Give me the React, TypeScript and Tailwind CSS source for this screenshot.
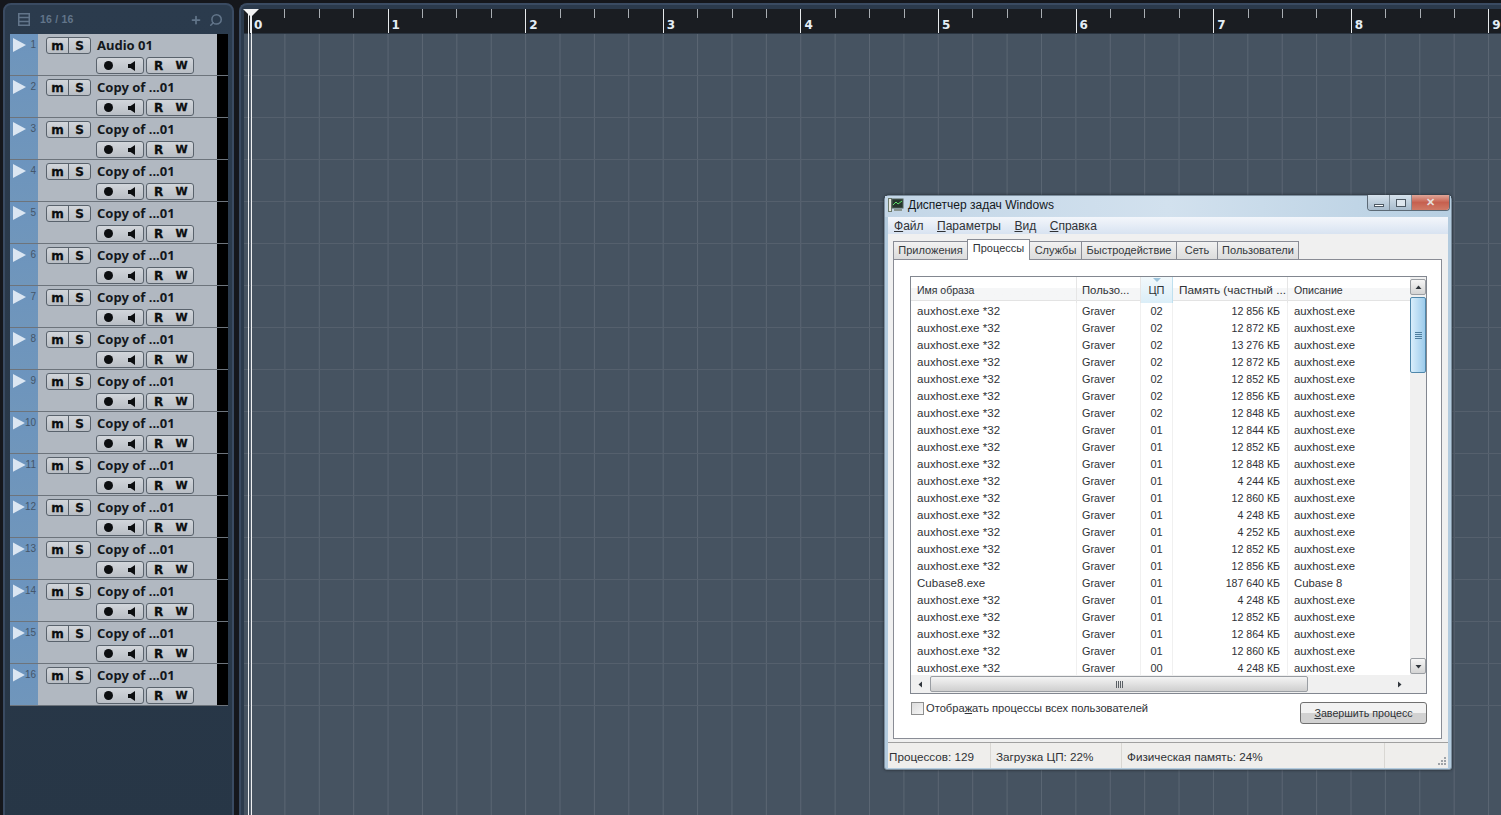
import React from "react";
import { Plus, Search } from "lucide-react";

const tracks = Array.from({ length: 16 }, (_, i) => ({
  n: i + 1,
  name: i === 0 ? "Audio 01" : "Copy of ...01",
}));

const mems = ["12 856","12 872","13 276","12 872","12 852","12 856","12 848","12 844","12 852","12 848","4 244","12 860","4 248","4 252","12 852","12 856","187 640","4 248","12 852","12 864","12 860","4 248"];

const rows = mems.map((m, i) => ({
  name: i === 16 ? "Cubase8.exe" : "auxhost.exe *32",
  cpu: i < 7 ? "02" : i < 21 ? "01" : "00",
  mem: m + " КБ",
  desc: i === 16 ? "Cubase 8" : "auxhost.exe",
}));

const glyph = "font-['DejaVu_Sans'] font-bold text-[12px] leading-none text-[#0c0e10] [-webkit-text-stroke:0.3px_#0c0e10] flex items-center justify-center";
const btn = "h-[17px] rounded-[3px] border border-[#59626c] bg-gradient-to-b from-[#d2d6db] to-[#b9bec5] flex";

function Track({ n, name }: { n: number; name: string }) {
  return (
    <div className="flex h-[42px] w-[218px] border-b border-[#6d747c]">
      <div className="flex w-[28px] justify-between bg-gradient-to-b from-[#6c94be] to-[#7096bb] pl-[3px] pr-[2px] pt-[4px]">
        <svg width="13" height="14" viewBox="0 0 13 14"><polygon points="0,0 13,7 0,14" fill="#dbe6f2" /></svg>
        <span className="font-['Liberation_Sans'] text-[10px] leading-[11px] pt-[1px] text-[#44566a]">{n}</span>
      </div>
      <div className="flex-1 bg-[#b1b8c1] pl-[8px] pt-[3px]">
        <div className="flex h-[17px] items-center">
          <div className={btn + " w-[45px]"}>
            <span className={glyph + " w-[22px] border-r border-[#59626c]"}>m</span>
            <span className={glyph + " flex-1"}>S</span>
          </div>
          <span className="ml-[6px] font-['Noto_Sans'] text-[13px] font-bold leading-[17px] text-[#14181d] whitespace-nowrap">{name}</span>
        </div>
        <div className="ml-[50px] mt-[3px] flex gap-[2px]">
          <div className={btn + " w-[48px] items-center justify-between pl-[7px] pr-[8px]"}>
            <span className="h-[9px] w-[9px] rounded-full bg-[#0c0e10]" />
            <svg width="7" height="10" viewBox="0 0 7 10"><polygon points="0,3 2.5,3 7,0 7,10 2.5,7 0,7" fill="#0c0e10" /></svg>
          </div>
          <div className={btn + " w-[48px]"}>
            <span className={glyph + " w-[23px]"}>R</span>
            <span className={glyph + " flex-1 !text-[11px]"}>W</span>
          </div>
        </div>
      </div>
      <div className="w-[11px] bg-black" />
    </div>
  );
}

function Bar({ n }: { n: number }) {
  return (
    <div className="flex w-[137.6px] shrink-0">
      <div className="h-[24px] w-[34.4px] border-l border-[#e6e9ec] pl-[3px] pt-[9px] font-['DejaVu_Sans'] text-[12px] font-bold leading-[15px] text-[#e4eef6]">{n}</div>
      {[0, 1, 2].map((b) => (
        <div key={b} className="w-[34.4px]"><div className="h-[9px] w-px bg-[#a9aeb3]" /></div>
      ))}
    </div>
  );
}

const tabs = [
  { t: "Приложения", w: "w-[75px]" },
  { t: "Процессы", w: "w-[63px]", on: true },
  { t: "Службы", w: "w-[53px]" },
  { t: "Быстродействие", w: "w-[96px]" },
  { t: "Сеть", w: "w-[42px]" },
  { t: "Пользователи", w: "w-[82px]" },
];

const cols = "grid grid-cols-[166px_64px_32px_115px_122px]";

function ScrollBtn({ d, cls }: { d: string; cls: string }) {
  return (
    <div className={"flex items-center justify-center " + cls}>
      <svg width="7" height="7" viewBox="0 0 7 7"><polygon points={d} fill="#30363c" /></svg>
    </div>
  );
}

function TaskManager() {
  return (
    <div className="absolute left-[884px] top-[195px] flex h-[575px] w-[568px] flex-col rounded-t-[5px] rounded-b-[3px] border border-[#7d8f9f] bg-[#b3cbde] font-['Liberation_Sans'] text-[12px] text-[#2f3236] shadow-[0_0_3px_#20262c]">
      <div className="relative flex h-[21px] shrink-0 items-center bg-gradient-to-r from-[#c3d6e7] via-[#d2e1ee] to-[#b7cfe2] pb-[4px] pl-[3px]">
        <svg width="16" height="14" viewBox="0 0 16 14">
          <rect x="0.5" y="0.5" width="3" height="13" fill="#e7e7e0" stroke="#6d7b6c" />
          <rect x="4" y="1" width="11" height="9" fill="#26352d" stroke="#506058" />
          <path d="M5 7 L8 4 L10 6 L14 3" stroke="#5fe06a" fill="none" />
          <rect x="6" y="11" width="8" height="2" fill="#8b9691" />
        </svg>
        <span className="ml-[4px] text-[12px] text-[#14181c]">Диспетчер задач Windows</span>
        <div className="absolute right-[1px] top-[-1px] flex h-[16px] w-[83px] overflow-hidden rounded-b-[4px] border border-t-0 border-[#5c6a76]">
          <div className="flex w-[22px] items-end justify-center border-r border-[#7f8d99] bg-gradient-to-b from-[#d5e1ec] to-[#a8bccd] pb-[3px]"><div className="h-[3px] w-[10px] border border-[#4d5964] bg-white" /></div>
          <div className="flex w-[22px] items-center justify-center border-r border-[#7f8d99] bg-gradient-to-b from-[#d5e1ec] to-[#a8bccd]"><div className="h-[8px] w-[10px] border border-[#4d5964] bg-[#dde6ee]" /></div>
          <div className="flex flex-1 items-center justify-center bg-gradient-to-b from-[#dfa699] via-[#c6604f] to-[#cf7a66] text-[11px] font-bold leading-none text-[#e4dedc]">✕</div>
        </div>
      </div>
      <div className="mx-[3px] flex h-[17px] shrink-0 items-center gap-[13.5px] bg-gradient-to-b from-[#f3f6fb] to-[#d8e3f1] pl-[6px]">
        <span><span className="underline">Ф</span>айл</span>
        <span><span className="underline">П</span>араметры</span>
        <span><span className="underline">В</span>ид</span>
        <span><span className="underline">С</span>правка</span>
      </div>
      <div className="mx-[3px] flex flex-1 flex-col bg-[#f0f0f0]">
        <div className="flex h-[25px] items-end pl-[6px] text-[11px]">
          {tabs.map((t) => (
            <div
              key={t.t}
              className={
                "flex items-center justify-center border border-b-0 border-[#898c95] " +
                t.w +
                (t.on
                  ? " relative z-10 mb-[-1px] -ml-px h-[21px] bg-white pb-[3px] "
                  : " h-[18px] -ml-px bg-gradient-to-b from-[#f2f2f2] to-[#dcdcdc] text-[#34383c] ")
              }
            >
              {t.t}
            </div>
          ))}
        </div>
        <div className="ml-[5px] mr-[6px] h-[480px] border border-[#898c95] bg-white pl-[16px] pt-[16px]">
          <div className="flex h-[418px] w-[517px] flex-col border border-[#828790]">
            <div className="flex h-[398px]">
              <div className="w-[499px] overflow-hidden">
                <div className={cols + " h-[24px] items-center border-b border-[#e3e3e3] bg-gradient-to-b from-white from-50% to-[#f5f6f7] to-50%"}>
                  <div className="h-full border-r border-[#e6e6e6] pl-[6px] text-[10.5px] leading-[26px]">Имя образа</div>
                  <div className="h-full border-r border-[#e6e6e6] pl-[5px] text-[11.3px] leading-[26px]">Пользо...</div>
                  <div className="relative h-full border-r border-[#bfe0ef] bg-gradient-to-b from-[#f2f9fc] to-[#dbeef8] text-center text-[11px] leading-[26px]">
                    <svg className="absolute left-[12px] top-[1px]" width="8" height="4" viewBox="0 0 8 4"><polygon points="0,0 8,0 4,4" fill="#9dc4dc" /></svg>
                    ЦП
                  </div>
                  <div className="h-full border-r border-[#e6e6e6] pl-[6px] text-[11.8px] leading-[26px] whitespace-nowrap">Память (частный ...</div>
                  <div className="h-full pl-[6px] text-[10.6px] leading-[26px]">Описание</div>
                </div>
                <div className="pt-[2px]">
                  {rows.map((r, i) => (
                    <div key={i} className={cols + " h-[17px] leading-[17px]"}>
                      <div className="border-r border-[#f0f0f0] pl-[6px] text-[11.5px] tracking-[0.05px]">{r.name}</div>
                      <div className="border-r border-[#f0f0f0] pl-[5px] text-[10.8px]">Graver</div>
                      <div className="border-r border-[#f0f0f0] text-center text-[11px]">{r.cpu}</div>
                      <div className="border-r border-[#f0f0f0] pr-[7px] text-right text-[10.6px]">{r.mem}</div>
                      <div className="pl-[6px] text-[11.3px]">{r.desc}</div>
                    </div>
                  ))}
                </div>
              </div>
              <div className="flex w-[16px] flex-col bg-[#f0f0f0] pt-[2px]">
                <ScrollBtn d="3.5,1.5 6.5,5 0.5,5" cls="h-[16px] rounded-[2px] border border-[#9a9ea3] bg-gradient-to-b from-[#f6f6f6] to-[#d4d4d4]" />
                <div className="mt-[2px] flex h-[76px] items-center justify-center rounded-[2px] border border-[#4f87ab] bg-gradient-to-r from-[#d9eefb] to-[#9ccbeb]">
                  <div className="h-[7px] w-[7px] border-y-[3px] border-double border-[#4f7f9e]" />
                </div>
                <div className="flex-1" />
                <ScrollBtn d="0.5,2 6.5,2 3.5,5.5" cls="mb-[1px] h-[16px] rounded-[2px] border border-[#9a9ea3] bg-gradient-to-b from-[#f6f6f6] to-[#d4d4d4]" />
              </div>
            </div>
            <div className="flex h-[18px] items-center bg-[#f0f0f0]">
              <ScrollBtn d="1.5,3.5 5,0.5 5,6.5" cls="h-full w-[19px]" />
              <div className="flex h-[16px] w-[378px] items-center justify-center rounded-[2px] border border-[#9a9ea3] bg-gradient-to-b from-[#f4f4f4] to-[#cfcfcf]">
                <div className="h-[7px] w-[7px] border-x-[3px] border-double border-[#5a5f64]" />
              </div>
              <div className="flex-1" />
              <ScrollBtn d="5.5,3.5 2,0.5 2,6.5" cls="h-full w-[17px] mr-[18px]" />
            </div>
          </div>
          <div className="mt-[8px] flex w-[517px] items-start justify-between">
            <div className="flex items-center pl-px">
              <div className="h-[13px] w-[13px] border border-[#8e8f8f] bg-gradient-to-br from-[#dcdcdc] to-[#f6f6f6]" />
              <span className="ml-[2px] text-[11.15px] leading-[13px]">Отобра<span className="underline">ж</span>ать процессы всех пользователей</span>
            </div>
            <div className="flex h-[22px] w-[127px] items-center justify-center rounded-[3px] border border-[#707070] bg-gradient-to-b from-[#f2f2f2] from-50% to-[#d2d2d2] to-50% text-[10.7px]">
              <span><span className="underline">З</span>авершить процесс</span>
            </div>
          </div>
        </div>
        <div className="flex h-[4px] shrink-0 border-b border-[#a0a0a0]" />
        <div className="flex flex-1 items-center bg-[#efeeec] text-[11.7px] leading-[25px]">
          <div className="h-[25px] w-[103px] border-r border-[#d9d7d3] pl-[1px] pt-[1px]">Процессов: 129</div>
          <div className="h-[25px] w-[131px] border-r border-[#d9d7d3] pl-[5px] pt-[1px]">Загрузка ЦП: 22%</div>
          <div className="h-[25px] w-[263px] border-r border-[#d9d7d3] pl-[5px] pt-[1px]">Физическая память: 24%</div>
          <div className="relative h-[25px] flex-1">
            <svg className="absolute bottom-[2px] right-[1px]" width="9" height="9" viewBox="0 0 9 9" fill="#9ea3a8">
              <rect x="6" y="0" width="2" height="2" /><rect x="3" y="3" width="2" height="2" /><rect x="6" y="3" width="2" height="2" /><rect x="0" y="6" width="2" height="2" /><rect x="3" y="6" width="2" height="2" /><rect x="6" y="6" width="2" height="2" />
            </svg>
          </div>
        </div>
      </div>
      <div className="h-[2px] shrink-0" />
    </div>
  );
}

export default function App() {
  return (
    <div className="relative flex h-[815px] w-[1501px] overflow-hidden bg-[#15171c] pt-[3px]">
      <div className="ml-[3px] h-[830px] w-[231px] shrink-0 rounded-t-[8px] border-2 border-[#3a4b62] bg-gradient-to-b from-[#2b3b4d] to-[#273646] pl-[5px]">
        <div className="flex h-[29px] items-center pl-[8px] pr-[9px] text-[#62758a]">
          <svg width="12" height="13" viewBox="0 0 12 13" fill="none" stroke="#62758a" strokeWidth="1.5">
            <rect x="0.75" y="0.75" width="10.5" height="11.5" />
            <path d="M1 4.5H11M1 8.5H11" />
          </svg>
          <span className="ml-[10px] font-['Liberation_Sans'] text-[10.5px] font-bold tracking-[0.2px]">16 / 16</span>
          <div className="flex-1" />
          <Plus size={12} strokeWidth={3.5} className="mr-[7px]" />
          <Search size={14} strokeWidth={2.6} className="-scale-x-100" />
        </div>
        {tracks.map((t) => (
          <Track key={t.n} n={t.n} name={t.name} />
        ))}
      </div>
      <div className="ml-[5px] flex h-[830px] flex-1 flex-col overflow-hidden rounded-tl-[8px] border-l-2 border-t-2 border-[#3a4b62] bg-[#2b3a4c]">
        <div className="mt-[4px] ml-[3px] flex h-[24px] shrink-0 overflow-hidden bg-[#1a1d22] pl-[6px]">
          {[0, 1, 2, 3, 4, 5, 6, 7, 8, 9].map((n) => (
            <Bar key={n} n={n} />
          ))}
        </div>
        <div className="ml-[3px] flex-1 border-t border-[#2a3440] bg-[#465361] bg-[linear-gradient(to_right,#5b6673_1px,transparent_1px)] bg-[length:34.4px_100%] bg-[position:6px_0]">
          {tracks.map((t) => (
            <div key={t.n} className="h-[42px] border-b border-[#55606d]" />
          ))}
        </div>
      </div>
      <div className="absolute left-[248px] top-[9px] h-[806px] w-[4px] border-x border-[#eef0f2]" />
      <svg className="absolute left-[243px] top-[9px]" width="16" height="8" viewBox="0 0 16 8"><polygon points="0,0 16,0 8,8" fill="#f2f3f4" /></svg>
      <TaskManager />
    </div>
  );
}
